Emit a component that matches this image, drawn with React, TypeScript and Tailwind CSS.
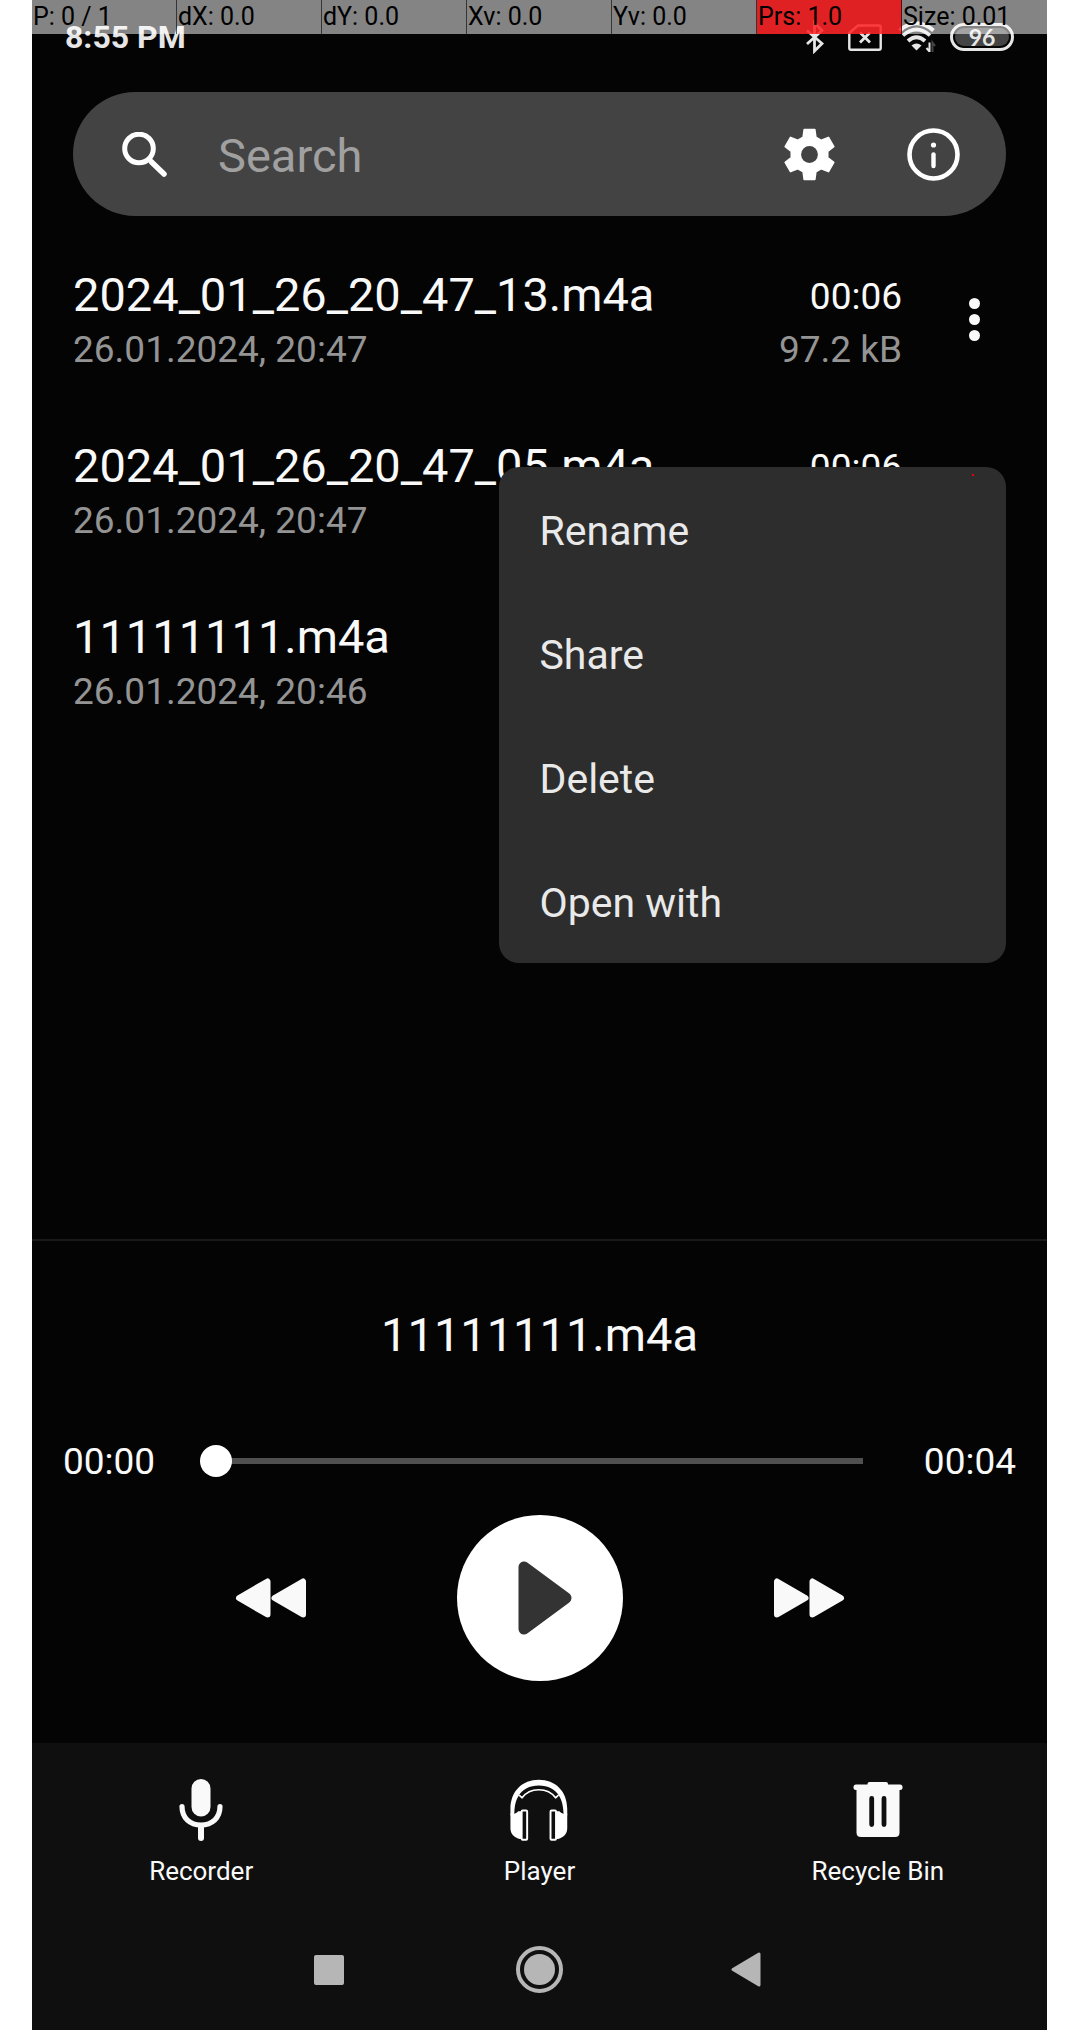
import { useState } from 'react';

const touchStats = [
  { text: 'P: 0 / 1' },
  { text: 'dX: 0.0' },
  { text: 'dY: 0.0' },
  { text: 'Xv: 0.0' },
  { text: 'Yv: 0.0' },
  { text: 'Prs: 1.0', active: true },
  { text: 'Size: 0.01' },
];

const recordings = [
  { name: '2024_01_26_20_47_13.m4a', date: '26.01.2024, 20:47', length: '00:06', size: '97.2 kB' },
  { name: '2024_01_26_20_47_05.m4a', date: '26.01.2024, 20:47', length: '00:06', size: '97.2 kB' },
  { name: '11111111.m4a', date: '26.01.2024, 20:46', length: '00:04', size: '65.1 kB' },
];

const menuItems = ['Rename', 'Share', 'Delete', 'Open with'];

/* Six-toothed gear outline around the origin. */
const gearPoints = [0, 60, 120, 180, 240, 300]
  .flatMap((base) =>
    [
      [-20, 55],
      [-12, 76],
      [12, 76],
      [20, 55],
    ].map(([offset, radius]) => {
      const angle = ((base + offset) * Math.PI) / 180;
      return `${(Math.sin(angle) * radius).toFixed(1)},${(-Math.cos(angle) * radius).toFixed(1)}`;
    }),
  )
  .join(' ');

function GearIcon() {
  return (
    <svg viewBox="-79 -79 158 158" className="size-[53px]" aria-hidden="true">
      <polygon points={gearPoints} fill="#fff" stroke="#fff" strokeWidth="5" strokeLinejoin="round" />
      <circle r="25" fill="#434343" />
    </svg>
  );
}

function InfoIcon() {
  return (
    <svg viewBox="0 0 53 53" className="size-[53px]" fill="none" stroke="#fff" aria-hidden="true">
      <circle cx="26.5" cy="26.5" r="24" strokeWidth="4.6" />
      <circle cx="26.5" cy="17" r="2.6" fill="#fff" stroke="none" />
      <path d="M26.5 26.5v11.5" strokeWidth="4.4" strokeLinecap="round" />
    </svg>
  );
}

function SearchIcon() {
  return (
    <svg viewBox="0 0 45 45" className="size-[45px] shrink-0" fill="none" stroke="#fff" strokeLinecap="round" aria-hidden="true">
      <circle cx="17" cy="16.500" r="14.3" strokeWidth="5" />
      <path d="M29.5 30 42 42" strokeWidth="5.500" />
      <path d="M27.5 27.5 30 30" strokeWidth="4" />
    </svg>
  );
}

function BluetoothIcon() {
  return (
    <svg viewBox="0 0 20 34" className="h-[34px] w-5" fill="none" stroke="#e6e6e6" strokeWidth="2.8" aria-hidden="true">
      <path d="M2 10.5 17 23.5 9.5 31V3L17 10.5 2 24" />
    </svg>
  );
}

function NoSimIcon() {
  return (
    <svg viewBox="0 0 34 27" className="ml-[23px] h-[27px] w-[34px]" fill="none" stroke="#e6e6e6" strokeWidth="2.4" strokeLinejoin="round" aria-hidden="true">
      <path d="M10 1.5H31q1.7 0 1.7 1.7V24q0 1.7-1.7 1.7H3q-1.7 0-1.7-1.7V9z" />
      <path d="m12 8.5 10 10M22 8.5l-10 10" strokeWidth="2.8" />
    </svg>
  );
}

function WifiIcon() {
  return (
    <svg viewBox="0 0 38 32" className="ml-4 h-8 w-[38px]" fill="none" stroke="#e6e6e6" aria-hidden="true">
      <path d="M1.5 9.5Q18.5-5 35.5 9.5" strokeWidth="4" />
      <path d="M5 14.5Q18.5 2.5 32 14.5" strokeWidth="3.6" />
      <path d="M10 20Q18.5 12.5 27 20" strokeWidth="4" />
      <path d="M13.5 24.5Q18.5 20.5 23.5 24.5L18.5 29.5z" fill="#e6e6e6" stroke="none" />
      <path d="M31.5 21.5V31M31.5 30.5 28.5 27" strokeWidth="2" />
      <path d="M34.5 31V21.5L37 25" stroke="#444" strokeWidth="2" />
    </svg>
  );
}

function RewindIcon() {
  return (
    <svg viewBox="0 0 72 40" className="h-10 w-[72px]" fill="#f9f9f9" stroke="#f9f9f9" strokeWidth="6" strokeLinejoin="round" aria-hidden="true">
      <path d="M4 20 32.5 3.5v33zM39.5 20 68 3.5v33z" />
    </svg>
  );
}

function ForwardIcon() {
  return (
    <svg viewBox="0 0 72 40" className="h-10 w-[72px]" fill="#f9f9f9" stroke="#f9f9f9" strokeWidth="6" strokeLinejoin="round" aria-hidden="true">
      <path d="M68 20 39.5 3.5v33zM32.5 20 4 3.5v33z" />
    </svg>
  );
}

function PlayIcon() {
  return (
    <svg viewBox="0 0 54 74" className="ml-2.5 h-[74px] w-[54px]" fill="#333" stroke="#333" strokeWidth="11" strokeLinejoin="round" aria-hidden="true">
      <path d="M6 6v62L48 37z" />
    </svg>
  );
}

function MicIcon() {
  return (
    <svg viewBox="0 0 44 62" className="h-[62px] w-11" fill="none" stroke="#f9f9f9" strokeLinecap="round" aria-hidden="true">
      <rect x="12.5" y="0" width="19" height="37.5" rx="9.5" fill="#f9f9f9" stroke="none" />
      <path d="M3 27.5C3 39 11 46 22 46s19-7 19-18.5" strokeWidth="5.2" />
      <path d="M22 47v12" strokeWidth="6" />
    </svg>
  );
}

function HeadphonesIcon() {
  return (
    <svg viewBox="86 53 180 191" className="h-[62px] w-[60px]" fill="#fff" aria-hidden="true">
      <path d="M88 165v-20C88 90 125 55 175.5 55S263 90 263 145v20h-11c-1-26-4-44-14-60-12-20-34-32-62.5-32S125 85 113 105c-10 16-13 34-13 60z" />
      <path d="M115 103 124 111C148 78 203 78 227 111L236 103" fill="none" stroke="#fff" strokeWidth="5" strokeLinejoin="round" />
      <path d="M88 160h12q8-2 12-8h10v86h-6C98 232 88 222 88 204zM263 160h-12q-8-2-12-8h-10v86h6c18-6 28-16 28-34z" />
      <rect x="122.5" y="150" width="17" height="90" rx="3" fill="#0f0f0f" stroke="#fff" strokeWidth="6" />
      <rect x="211.5" y="150" width="17" height="90" rx="3" fill="#0f0f0f" stroke="#fff" strokeWidth="6" />
    </svg>
  );
}

function BinIcon() {
  return (
    <svg viewBox="0 0 50 62" className="h-[62px] w-[50px]" fill="#f9f9f9" aria-hidden="true">
      <rect x="14.5" y="3" width="20.5" height="6" rx="2" />
      <rect x="0.5" y="5.5" width="49" height="5.5" rx="2.5" />
      <path d="M3.5 8h43v45.5q0 4.5-4.5 4.5H8q-4.5 0-4.5-4.5z" />
      <path d="M18.7 19.5v26M31 19.5v26" stroke="#0f0f0f" strokeWidth="4.8" strokeLinecap="round" />
    </svg>
  );
}

const tabs = [
  { label: 'Recorder', icon: <MicIcon /> },
  { label: 'Player', icon: <HeadphonesIcon /> },
  { label: 'Recycle Bin', icon: <BinIcon /> },
];

export default function App() {
  const [position, setPosition] = useState(0);
  const [query, setQuery] = useState('');

  return (
    <div className="min-h-screen bg-white pr-[41px] pl-8 font-[Roboto,sans-serif]">
      <div className="relative flex min-h-screen flex-col bg-[#040404] text-[#f9f9f9]">
        <header className="flex h-[92px] items-start justify-between px-[33px] pt-[19px]">
          <span className="text-[32px] leading-9 font-bold text-[#e6e6e6]">8:55 PM</span>
          <div className="flex h-9 items-center">
            <BluetoothIcon />
            <NoSimIcon />
            <WifiIcon />
            <div className="ml-3.5 flex h-7 w-16 rounded-full border-[3px] border-[#e6e6e6] p-0.5">
              <span className="flex flex-1 items-center justify-center rounded-full bg-[#444] font-[Lato,sans-serif] text-[23px] leading-none font-bold text-[#e6e6e6]">
                96
              </span>
            </div>
          </div>
        </header>

        <div className="absolute inset-x-0 top-0 grid h-[33px] grid-cols-7">
          {touchStats.map((stat) => (
            <span
              key={stat.text}
              className={
                stat.active
                  ? 'border-r border-black/60 bg-[#ff2628]/88 pl-px text-[25px] leading-[34px] whitespace-nowrap text-black'
                  : 'border-r border-black/60 bg-white/51 pl-px text-[25px] leading-[34px] whitespace-nowrap text-black last:border-r-0'
              }
            >
              {stat.text}
            </span>
          ))}
        </div>

        <div className="mx-[41px] flex h-[124px] items-center rounded-full bg-[#434343] pr-[46px] pl-[49px]">
          <SearchIcon />
          <input
            type="search"
            aria-label="Search"
            placeholder="Search"
            value={query}
            onChange={(event) => setQuery(event.target.value)}
            className="ml-[51px] min-w-0 flex-1 bg-transparent pt-1 text-[47px] leading-[56px] text-white outline-none placeholder:text-[#a0a0a0]"
          />
          <button type="button" aria-label="Settings">
            <GearIcon />
          </button>
          <button type="button" aria-label="Information" className="ml-[71px]">
            <InfoIcon />
          </button>
        </div>

        <main className="relative flex-1 pt-[18px] pb-[100px]">
          <ul>
            {recordings.map((recording) => (
              <li key={recording.name} className="flex h-[171px] items-center pr-[57px] pl-[41px]">
                <div className="flex flex-1 items-end justify-between">
                  <div>
                    <div className="text-[47px] leading-[56px]">{recording.name}</div>
                    <div className="mt-[5px] text-[37px] leading-[44px] text-[#949494]">{recording.date}</div>
                  </div>
                  <div className="text-right text-[37px] leading-[44px]">
                    <div>{recording.length}</div>
                    <div className="mt-[9px] text-[#949494]">{recording.size}</div>
                  </div>
                </div>
                <button
                  type="button"
                  aria-label={`Options for ${recording.name}`}
                  className="ml-[56px] flex w-8 flex-col items-center gap-[5px]"
                >
                  <span className="size-[11px] rounded-full bg-[#f9f9f9]" />
                  <span className="size-[11px] rounded-full bg-[#f9f9f9]" />
                  <span className="size-[11px] rounded-full bg-[#f9f9f9]" />
                </button>
              </li>
            ))}
          </ul>

          <div role="menu" className="absolute top-[251px] right-[41px] w-1/2 rounded-[20px] bg-[#2d2d2d]">
            {menuItems.map((item) => (
              <button
                key={item}
                type="button"
                role="menuitem"
                className="flex h-[124px] w-full items-center pt-1 pl-[41px] text-[41px] leading-[50px] text-[#e9e9e9]"
              >
                {item}
              </button>
            ))}
            <span className="absolute top-[7px] right-8 size-0.5 bg-red-600" />
          </div>
        </main>

        <section aria-label="Player controls" className="border-t-2 border-[#181818] px-[31px] pt-[66px] pb-[62px]">
          <h2 className="text-center text-[47px] leading-[56px]">11111111.m4a</h2>
          <div className="mt-[77px] flex items-center text-[37px] leading-[44px]">
            <span>00:00</span>
            <input
              type="range"
              min={0}
              max={4}
              value={position}
              onChange={(event) => setPosition(Number(event.target.value))}
              aria-label="Playback position"
              className="mx-[45px] mb-0.5 h-8 min-w-0 flex-1 appearance-none bg-[linear-gradient(#505050,#505050)] bg-[length:calc(100%-32px)_6px] bg-center bg-no-repeat [&::-webkit-slider-thumb]:size-8 [&::-webkit-slider-thumb]:appearance-none [&::-webkit-slider-thumb]:rounded-full [&::-webkit-slider-thumb]:bg-white"
            />
            <span>00:04</span>
          </div>
          <div className="mt-[31px] flex items-center justify-center gap-[150px]">
            <button type="button" aria-label="Rewind">
              <RewindIcon />
            </button>
            <button
              type="button"
              aria-label="Play"
              className="flex size-[166px] items-center justify-center rounded-full bg-white"
            >
              <PlayIcon />
            </button>
            <button type="button" aria-label="Fast forward">
              <ForwardIcon />
            </button>
          </div>
        </section>

        <footer className="bg-[#0f0f0f] pt-9 pb-[37px]">
          <nav className="grid grid-cols-3">
            {tabs.map((tab) => (
              <button key={tab.label} type="button" className="flex flex-col items-center text-[26px] leading-[30px]">
                {tab.icon}
                <span className="mt-[15px]">{tab.label}</span>
              </button>
            ))}
          </nav>
          <div className="mt-[60px] flex items-center justify-center pr-1">
            <button type="button" aria-label="Recent apps" className="size-[30px] rounded-xs bg-[#b6b6b6]" />
            <button
              type="button"
              aria-label="Home"
              className="mr-[168px] ml-[172px] flex size-[47px] items-center justify-center rounded-full border-4 border-[#b6b6b6]"
            >
              <span className="size-[31px] rounded-full bg-[#b6b6b6]" />
            </button>
            <button type="button" aria-label="Back">
              <svg viewBox="0 0 30 35" className="h-[35px] w-[30px]" fill="#b6b6b6" stroke="#b6b6b6" strokeWidth="3" strokeLinejoin="round" aria-hidden="true">
                <path d="M2 17.5 28 2v31z" />
              </svg>
            </button>
          </div>
        </footer>
      </div>
    </div>
  );
}
